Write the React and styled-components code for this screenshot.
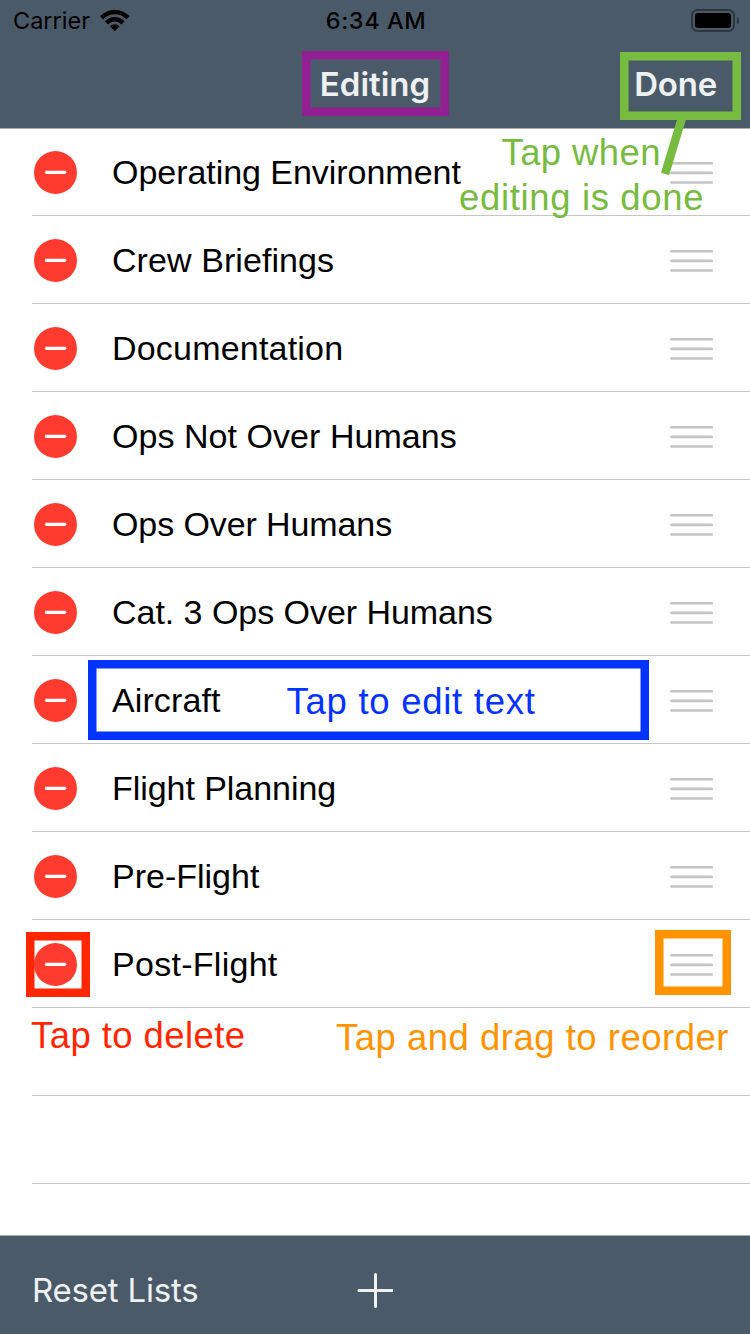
import React from "react";
import styled, { createGlobalStyle } from "styled-components";

const GlobalStyle = createGlobalStyle`
  *, *::before, *::after { box-sizing: border-box; }
  body { margin: 0; background: #fff; }
`;

const Screen = styled.div`
  position: relative;
  display: flex;
  flex-direction: column;
  width: 750px;
  height: 1334px;
  overflow: hidden;
  background: #fff;
  font-family: "Liberation Sans", Arial, sans-serif;
  color: #000;
`;

const Header = styled.header`
  flex: none;
  height: 129px;
  background: #4b5a69;
  border-bottom: 1px solid #a9abad;
  font-family: Inter, sans-serif;
`;

const StatusBar = styled.div`
  display: grid;
  grid-template-columns: 1fr auto 1fr;
  align-items: center;
  height: 40px;
  padding: 0 11px 0 13px;
  line-height: 40px;
`;

const Carrier = styled.div`
  display: flex;
  align-items: center;
  gap: 10px;
  font-size: 23.5px;
`;

const CarrierName = styled.span`
  padding-top: 1px;
`;

const Clock = styled.time`
  padding-top: 1px;
  font-size: 23.5px;
  font-weight: 500;
  letter-spacing: 0.55px;
`;

const Status = styled.div`
  display: flex;
  justify-content: flex-end;
`;

const NavBar = styled.div`
  display: grid;
  grid-template-columns: 1fr auto 1fr;
  align-items: center;
  height: 88px;
  padding: 0 33px;
  color: #edf1f2;
`;

const Title = styled.h1`
  grid-column: 2;
  margin: 0;
  font-size: 33px;
  font-weight: 600;
  line-height: 88px;
`;

const NavButton = styled.button`
  justify-self: end;
  padding: 0;
  border: 0;
  background: none;
  color: inherit;
  font: 600 33px/88px Inter, sans-serif;
  letter-spacing: -0.2px;
`;

const List = styled.ul`
  flex: 1;
  min-height: 0;
  margin: -1px 0 0;
  padding: 0 0 0 32px;
  list-style: none;
`;

const Row = styled.li`
  display: flex;
  align-items: center;
  height: 88px;
  padding: 1px 37px 0 2px;
  border-bottom: 1px solid #c6c6c8;
`;

const Label = styled.span`
  flex: 1;
  margin-left: 35px;
  font-size: 34px;
  line-height: 44px;
  white-space: nowrap;
  letter-spacing: ${(p) => p.$spacing}px;
`;

const Toolbar = styled.footer`
  flex: none;
  display: grid;
  grid-template-columns: 1fr auto 1fr;
  align-items: center;
  height: 99px;
  padding: 11px 32px 0;
  background: #4b5a69;
  border-top: 1px solid #a4abb1;
  color: #edf1f2;
`;

const ToolButton = styled.button`
  display: flex;
  justify-self: start;
  padding: 0;
  border: 0;
  background: none;
  color: inherit;
  font: 400 33px/42px Inter, sans-serif;
  letter-spacing: -0.2px;
`;

const ToolLabel = styled.span`
  padding-bottom: 2px;
`;

const Frame = styled.div`
  position: absolute;
  left: ${(p) => p.$x}px;
  top: ${(p) => p.$y}px;
  width: ${(p) => p.$w}px;
  height: ${(p) => p.$h}px;
  box-shadow: inset 0 0 0 8.5px ${(p) => p.$color};
`;

const Note = styled.div`
  position: absolute;
  left: ${(p) => p.$x}px;
  top: ${(p) => p.$y}px;
  color: ${(p) => p.$color};
  font-size: 36.5px;
  line-height: 45px;
  letter-spacing: ${(p) => p.$spacing}px;
  white-space: nowrap;
`;

const Pointer = styled.svg`
  position: absolute;
  left: 655px;
  top: 105px;
`;

const WifiIcon = () => (
  <svg width="30" height="23" viewBox="0 0 30 23">
    <path d="M0 7.200C8-1.500 21.600-1.500 29.600 7.200L26.500 10.400C20 3.600 9.600 3.600 3.100 10.400z" />
    <path d="M5 12.300C10.500 6.400 19.100 6.400 24.600 12.300L21.500 15.500C17.700 11.600 11.900 11.600 8.100 15.500z" />
    <path d="M10 17.300C12.800 14.600 16.800 14.600 19.600 17.300L14.800 22.300z" />
  </svg>
);

const BatteryIcon = () => (
  <svg width="48" height="23" viewBox="0 0 48 23">
    <rect x="1" y="1" width="42" height="21" rx="5.500" fill="none" stroke="#2c3640" strokeWidth="2" />
    <rect x="4" y="4" width="36" height="15" rx="3" fill="#000" />
    <path d="M46 8c1.900.7 2.400 2.100 2.400 3.500S47.900 14.300 46 15z" fill="#2c3640" />
  </svg>
);

const DeleteIcon = () => (
  <svg width="43" height="43" viewBox="0 0 43 43">
    <circle cx="21.500" cy="21.500" r="21.500" fill="#ff3b30" />
    <rect x="10.900" y="19.800" width="21.400" height="3.200" rx="1.400" fill="#fff" />
  </svg>
);

const GripIcon = () => (
  <svg width="43" height="23" viewBox="0 0 43 23">
    <g fill="#c4c4c6">
      <rect y="1" width="43" height="2.600" rx="1.200" />
      <rect y="10.600" width="43" height="2.600" rx="1.200" />
      <rect y="20.200" width="43" height="2.600" rx="1.200" />
    </g>
  </svg>
);

const PlusIcon = () => (
  <svg width="36" height="36" viewBox="0 0 36 36" stroke="#edf1f2" strokeWidth="3" strokeLinecap="round">
    <path d="M18.500 1.500v32M2 17.500h33" />
  </svg>
);

const ROWS = [
  ["Operating Environment", -0.04],
  ["Crew Briefings", 0.07],
  ["Documentation", 0.2],
  ["Ops Not Over Humans", 0.05],
  ["Ops Over Humans", -0.1],
  ["Cat. 3 Ops Over Humans", -0.04],
  ["Aircraft", 0.1],
  ["Flight Planning", -0.05],
  ["Pre-Flight", 0],
  ["Post-Flight", 0.28],
];

export default function App() {
  return (
    <>
      <GlobalStyle />
      <Screen>
        <Header>
          <StatusBar>
            <Carrier>
              <CarrierName>Carrier</CarrierName>
              <WifiIcon />
            </Carrier>
            <Clock>6:34 AM</Clock>
            <Status>
              <BatteryIcon />
            </Status>
          </StatusBar>
          <NavBar>
            <Title>Editing</Title>
            <NavButton>Done</NavButton>
          </NavBar>
        </Header>
        <List>
          {ROWS.map(([name, spacing]) => (
            <Row key={name}>
              <DeleteIcon />
              <Label $spacing={spacing}>{name}</Label>
              <GripIcon />
            </Row>
          ))}
          <Row />
          <Row />
        </List>
        <Toolbar>
          <ToolButton>
            <ToolLabel>Reset Lists</ToolLabel>
          </ToolButton>
          <ToolButton aria-label="Add">
            <PlusIcon />
          </ToolButton>
        </Toolbar>

        <Frame $x={302} $y={51} $w={147} $h={65} $color="#932092" />
        <Frame $x={620} $y={52} $w={121} $h={68} $color="#77bb41" />
        <Frame $x={88} $y={660} $w={561} $h={80} $color="#0433ff" />
        <Frame $x={26} $y={932} $w={64} $h={65} $color="#ff2600" />
        <Frame $x={655} $y={930} $w={76} $h={65} $color="#ff9300" />
        <Pointer width="40" height="75">
          <path d="M28.500 8L10 69" stroke="#77bb41" strokeWidth="8.500" />
        </Pointer>
        <Note $x={501.5} $y={130} $spacing={0.4} $color="#77bb41">Tap when</Note>
        <Note $x={459} $y={175} $spacing={0.65} $color="#77bb41">editing is done</Note>
        <Note $x={286.5} $y={679} $spacing={0.73} $color="#0433ff">Tap to edit text</Note>
        <Note $x={31} $y={1013} $spacing={0.42} $color="#ff2600">Tap to delete</Note>
        <Note $x={336} $y={1015} $spacing={0.5} $color="#ff9300">Tap and drag to reorder</Note>
      </Screen>
    </>
  );
}
